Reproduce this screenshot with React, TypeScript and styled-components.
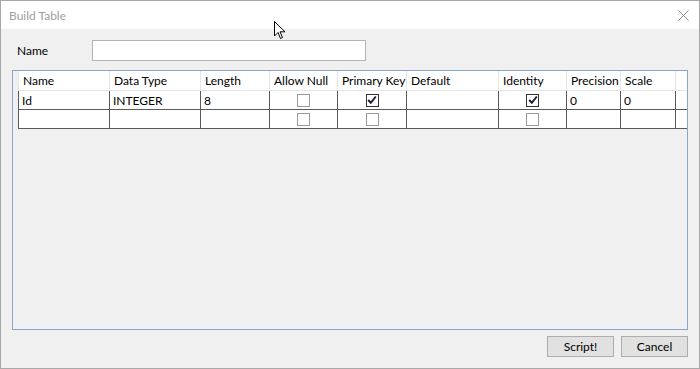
import React from "react";
import styled, { createGlobalStyle } from "styled-components";

const GlobalStyle = createGlobalStyle`
    html, body {
        margin: 0;
        padding: 0;
        background: #f0f0f0;
    }
    body {
        font-family: Lato, "Noto Sans", "Liberation Sans", sans-serif;
        font-size: 12px;
        color: #000;
    }
`

const Window = styled.div`
    width: 700px;
    height: 369px;
    box-sizing: border-box;
    border: 1px solid #a8a8a8;
    display: flex;
    flex-direction: column;
    background: #f0f0f0;
    position: relative;
    overflow: hidden;
`

const TitleBar = styled.div`
    height: 28px;
    background: #ffffff;
    display: flex;
    align-items: center;
    justify-content: space-between;
    padding: 0 8px 0 8px;
`

const Title = styled.span`
    color: #a0a0a0;
    font-size: 12px;
`

const CloseButton = styled.div`
    width: 14px;
    height: 14px;
    display: flex;
    align-items: center;
    justify-content: center;
    margin-right: 1px;
`

const Body = styled.div`
    flex: 1;
    display: flex;
    flex-direction: column;
    padding: 11px 11px 11px 11px;
`

const NameRow = styled.div`
    display: flex;
    align-items: center;
    height: 21px;
    padding-left: 5px;
`

const Label = styled.label`
    width: 75px;
    font-size: 12px;
`

const TextInput = styled.div`
    width: 272px;
    height: 19px;
    background: #fff;
    border: 1px solid #b4b4b4;
`

const GridBox = styled.div`
    margin-top: 9px;
    height: 260px;
    box-sizing: border-box;
    border: 1px solid #87a6cc;
    padding-left: 5px;
    background: #f0f0f0;
`

const Table = styled.div`
    display: grid;
    grid-template-columns: 92px 91px 69px 68px 69px 92px 68px 54px 55px 1fr;
`

type CellProps = { head?: boolean; last?: boolean; align?: string };

const Cell = styled.div<CellProps>`
    height: ${(p) => (p.head ? "20px" : "19px")};
    box-sizing: border-box;
    display: flex;
    align-items: center;
    justify-content: ${(p) => p.align || "flex-start"};
    padding-left: ${(p) => (p.align ? "0" : p.head ? "4px" : "3px")};
    background: #fff;
    white-space: nowrap;
    overflow: hidden;
    border-right: 1px solid ${(p) => (p.head ? "#e5e5e5" : "#5a5a5a")};
    border-bottom: 1px solid ${(p) => (p.head ? "#e5e5e5" : "#5a5a5a")};
    ${(p) => (p.last ? "border-right: none;" : "")}
`

const RowStart = styled(Cell)`
    border-left: 1px solid ${(p) => (p.head ? "#e5e5e5" : "#5a5a5a")};
`

const Check = styled.div<{ checked?: boolean }>`
    width: 11px;
    height: 11px;
    border: 1px solid ${(p) => (p.checked ? "#333" : "#9a9a9a")};
    background: #fff;
    display: flex;
    align-items: center;
    justify-content: center;
`

const Spacer = styled.div`
    flex: 1;
`

const ButtonRow = styled.div`
    display: flex;
    justify-content: flex-end;
    gap: 7px;
    margin-top: 6px;
`

const Button = styled.button`
    width: 67px;
    height: 21px;
    background: #e1e1e1;
    border: 1px solid #adadad;
    font-family: inherit;
    font-size: 12px;
    color: #000;
    padding: 0;
`

const Cursor = styled.svg`
    position: absolute;
    left: 273px;
    top: 20px;
`

const CheckMark = () => (
    <svg width="10" height="10" viewBox="0 0 10 10">
        <path d="M1.2 5 L3.8 7.8 L8.8 1.5" stroke="#1e1e3c" strokeWidth="2" fill="none" />
    </svg>
);

const columns = ["Name", "Data Type", "Length", "Allow Null", "Primary Key", "Default", "Identity", "Precision", "Scale", ""];

type Row = (string | { check: boolean })[];

const rows: Row[] = [
    ["Id", "INTEGER", "8", { check: false }, { check: true }, "", { check: true }, "0", "0", ""],
    ["", "", "", { check: false }, { check: false }, "", { check: false }, "", "", ""],
];

export default function App() {
    return (
        <>
            <GlobalStyle />
            <Window>
                <TitleBar>
                    <Title>Build Table</Title>
                    <CloseButton>
                        <svg width="11" height="11" viewBox="0 0 11 11">
                            <path d="M0.5 0.5 L10.5 10.5 M10.5 0.5 L0.5 10.5" stroke="#8a8a8a" strokeWidth="1" />
                        </svg>
                    </CloseButton>
                </TitleBar>
                <Body>
                    <NameRow>
                        <Label>Name</Label>
                        <TextInput />
                    </NameRow>
                    <GridBox>
                        <Table>
                            {columns.map((c, i) => {
                                const C = i === 0 ? RowStart : Cell;
                                return (
                                    <C head key={"h" + i} last={i === columns.length - 1}>
                                        {c}
                                    </C>
                                );
                            })}
                            {rows.map((r, ri) =>
                                r.map((v, i) => {
                                    const C = i === 0 ? RowStart : Cell;
                                    const last = i === r.length - 1;
                                    if (typeof v === "object") {
                                        return (
                                            <C key={ri + "-" + i} align="center">
                                                <Check checked={v.check}>{v.check && <CheckMark />}</Check>
                                            </C>
                                        );
                                    }
                                    return (
                                        <C key={ri + "-" + i} last={last}>
                                            {v}
                                        </C>
                                    );
                                })
                            )}
                        </Table>
                    </GridBox>
                    <Spacer />
                    <ButtonRow>
                        <Button>Script!</Button>
                        <Button>Cancel</Button>
                    </ButtonRow>
                </Body>
                <Cursor width="12" height="19" viewBox="0 0 12 19">
                    <path d="M0.5 0.5 L0.5 15 L4 11.5 L6.5 17.5 L8.5 16.5 L6 10.8 L11 10.8 Z" fill="#fff" stroke="#000" strokeWidth="1" />
                </Cursor>
            </Window>
        </>
    );
}
